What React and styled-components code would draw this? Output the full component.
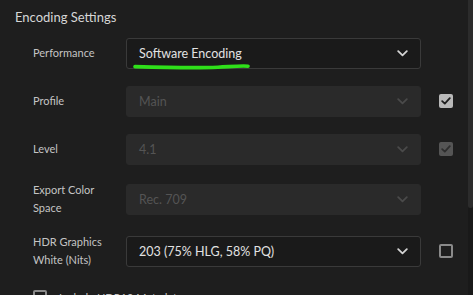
import React from 'react';
import styled, { createGlobalStyle } from 'styled-components';

const rows = [
  { label: 'Performance', value: 'Software Encoding', check: null, mark: true },
  { label: 'Profile', value: 'Main', disabled: true, check: 'on' },
  { label: 'Level', value: '4.1', disabled: true, check: 'dim' },
  { label: 'Export Color\nSpace', value: 'Rec. 709', disabled: true, check: null, tall: true },
  { label: 'HDR Graphics\nWhite (Nits)', value: '203 (75% HLG, 58% PQ)', check: 'off', tall: true },
];

const Chevron = ({ disabled }) => (
  <svg width="11" height="7" viewBox="0 0 11 7">
    <path
      d="M1.2 1.2 L5.5 5.3 L9.8 1.2"
      fill="none"
      stroke={disabled ? '#4a4a4a' : '#d4d4d4'}
      strokeWidth="1.8"
      strokeLinecap="round"
      strokeLinejoin="round"
    />
  </svg>
);

const Tick = ({ color }) => (
  <svg width="10" height="8" viewBox="0 0 10 8">
    <path
      d="M1.2 4.2 L3.8 6.6 L8.8 1.2"
      fill="none"
      stroke={color}
      strokeWidth="1.8"
      strokeLinecap="round"
      strokeLinejoin="round"
    />
  </svg>
);

const Marker = () => (
  <MarkLayer width="118" height="8" viewBox="0 0 118 8">
    <path
      d="M2 4.6 C 30 5.4, 60 6.2, 85 5.2 C 98 4.6, 108 3.6, 115 4.2"
      fill="none"
      stroke="#2fe01a"
      strokeWidth="3.6"
      strokeLinecap="round"
    />
  </MarkLayer>
);

const App = () => (
  <>
    <GlobalStyle />
    <Panel>
      <Content>
        <Heading>Encoding Settings</Heading>
        <Form>
          {rows.map((r) => (
            <Row key={r.label} tall={r.tall}>
              <Label>{r.label}</Label>
              <Select disabled={r.disabled}>
                <Value disabled={r.disabled}>{r.value}</Value>
                <Chevron disabled={r.disabled} />
                {r.mark && <Marker />}
              </Select>
              {r.check && (
                <Check state={r.check}>
                  {r.check === 'on' && <Tick color="#1e1e1e" />}
                  {r.check === 'dim' && <Tick color="#2e2e2e" />}
                </Check>
              )}
            </Row>
          ))}
          <CheckRow>
            <Check state="off" />
            <CheckText>Include HDR10 Metadata</CheckText>
          </CheckRow>
        </Form>
      </Content>
      <Scroll>
        <Thumb />
      </Scroll>
    </Panel>
  </>
);

export default App;

const GlobalStyle = createGlobalStyle`
  html, body {
    margin: 0;
    padding: 0;
    background: #1e1e1e;
    overflow: hidden;
  }
`;

const Panel = styled.div`
  display: flex;
  width: 473px;
  height: 295px;
  overflow: hidden;
  background: #1e1e1e;
  font-family: Lato, 'Noto Sans', sans-serif;
`;

const Content = styled.div`
  flex: 1;
  padding: 8px 0 0 15px;
`;

const Heading = styled.div`
  font-size: 13px;
  line-height: 18px;
  color: #d6d6d6;
`;

const Form = styled.div`
  display: flex;
  flex-direction: column;
  gap: 16px;
  padding: 11px 0 0 18px;
`;

const Row = styled.div`
  display: grid;
  grid-template-columns: 93px 295px 32px;
  align-items: center;
  height: ${(p) => (p.tall ? '36px' : '32px')};
`;

const Label = styled.div`
  white-space: pre-line;
  font-size: 11px;
  line-height: 18px;
  color: #c4c4c4;
`;

const Select = styled.div`
  position: relative;
  display: flex;
  align-items: center;
  justify-content: space-between;
  box-sizing: border-box;
  height: 31px;
  padding: 0 12px 0 12px;
  border-radius: 3px;
  background: ${(p) => (p.disabled ? '#2a2a2a' : '#1a1a1a')};
  border: 1px solid ${(p) => (p.disabled ? '#2a2a2a' : '#3a3a3a')};
`;

const Value = styled.span`
  font-size: 12.5px;
  color: ${(p) => (p.disabled ? '#545454' : '#e2e2e2')};
`;

const MarkLayer = styled.svg`
  position: absolute;
  left: 6px;
  top: 23px;
`;

const Check = styled.div`
  display: flex;
  align-items: center;
  justify-content: center;
  justify-self: end;
  box-sizing: border-box;
  width: 14px;
  height: 14px;
  border-radius: 2px;
  background: ${(p) =>
    p.state === 'on' ? '#b9b9b9' : p.state === 'dim' ? '#555' : 'transparent'};
  border: ${(p) => (p.state === 'off' ? '2px solid #8a8a8a' : 'none')};
`;

const CheckRow = styled.div`
  display: flex;
  align-items: center;
  gap: 12px;
  height: 24px;
`;

const CheckText = styled.span`
  font-size: 11px;
  color: #c4c4c4;
`;

const Scroll = styled.div`
  width: 5px;
  background: #191919;
`;

const Thumb = styled.div`
  height: 208px;
  border-radius: 0 0 3px 3px;
  background: #2c2c2c;
`;
